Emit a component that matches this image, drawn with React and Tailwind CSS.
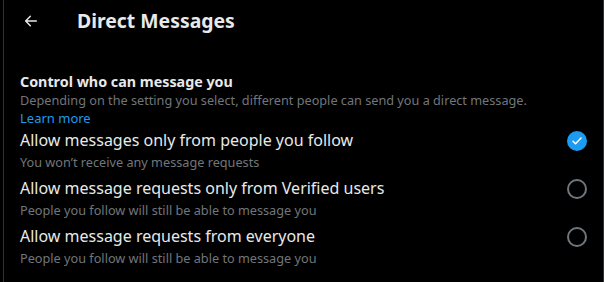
import React from "react";

const font = { fontFamily: '"Noto Sans", "Liberation Sans", sans-serif' };

function Option({ title, sub, checked }) {
  return (
    <div className="flex items-center justify-between h-[48px]">
      <div className="flex flex-col">
        <div className="text-[16px] leading-[20px] text-[#e7e9ea]">{title}</div>
        <div className="text-[12.7px] leading-[21px] mt-[2px] text-[#71767b]">{sub}</div>
      </div>
      <div className="w-[20px] h-[20px] mr-[16px] mb-[20px] flex items-center justify-center">
        {checked ? (
          <div className="w-[20px] h-[20px] rounded-full bg-[#1d9bf0] flex items-center justify-center">
            <svg width="12" height="12" viewBox="0 0 24 24" fill="none" stroke="white" strokeWidth="3" strokeLinecap="round" strokeLinejoin="round">
              <path d="M4 12.5l5 5L20 6" />
            </svg>
          </div>
        ) : (
          <div className="w-[20px] h-[20px] rounded-full border-2 border-[#6e767d]" />
        )}
      </div>
    </div>
  );
}

export default function App() {
  return (
    <div className="w-[604px] h-[282px] bg-black overflow-hidden flex" style={font}>
      <div className="w-[3px] shrink-0" />
      <div className="flex-1 border-l border-r border-[#2f3336] flex flex-col">
        <div className="h-[40px] flex items-center pl-[19px] pt-[1px]">
          <svg width="16" height="16" viewBox="0 0 24 24" fill="none" stroke="#e7e9ea" strokeWidth="2.2" strokeLinecap="round" strokeLinejoin="round">
            <path d="M20 12H4M11 5l-7 7 7 7" />
          </svg>
          <div className="ml-[38px] text-[19.4px] font-bold text-[#e7e9ea] leading-[24px]">Direct Messages</div>
        </div>
        <div className="pl-[16px] pt-[32px]">
          <div className="text-[14.3px] font-bold leading-[20px] text-[#e7e9ea]">Control who can message you</div>
          <div className="text-[12.7px] leading-[17px] text-[#71767b]">
            Depending on the setting you select, different people can send you a direct message.
          </div>
          <div className="text-[13px] leading-[17px] mt-[1px] text-[#1d9bf0]">Learn more</div>
          <div>
            <Option title="Allow messages only from people you follow" sub="You won’t receive any message requests" checked />
            <Option title="Allow message requests only from Verified users" sub="People you follow will still be able to message you" />
            <Option title="Allow message requests from everyone" sub="People you follow will still be able to message you" />
          </div>
        </div>
      </div>
    </div>
  );
}
